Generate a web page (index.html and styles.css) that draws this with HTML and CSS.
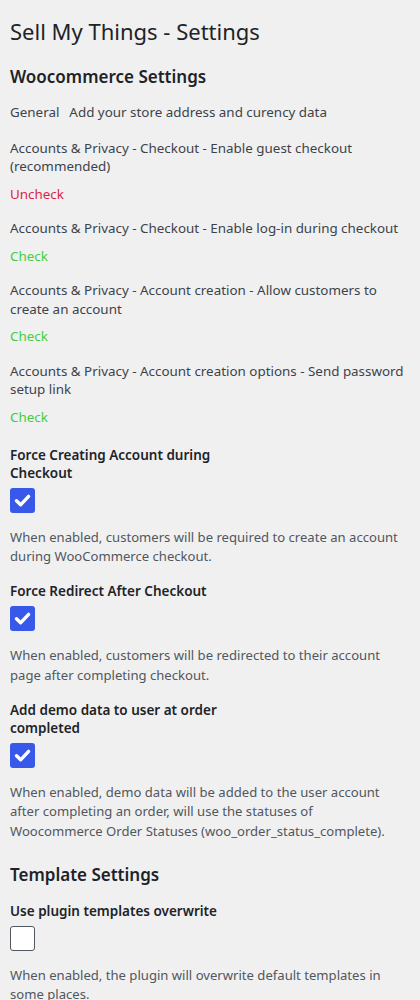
FILE: index.html
```html
<!DOCTYPE html>
<html lang="en">
<head>
<meta charset="utf-8">
<title>Sell My Things - Settings</title>
<link rel="stylesheet" href="styles.css">
</head>
<body>
<div class="wrap">
  <h1 class="page-title">Sell My Things - Settings</h1>

  <h2 class="section-title">Woocommerce Settings</h2>
  <p class="line general"><span class="general-key">General</span>Add your store address and curency data</p>

  <div class="task">
    <p class="line">Accounts &amp; Privacy - Checkout - Enable guest checkout (recommended)</p>
    <p class="status uncheck">Uncheck</p>
  </div>
  <div class="task">
    <p class="line">Accounts &amp; Privacy - Checkout - Enable log-in during checkout</p>
    <p class="status check">Check</p>
  </div>
  <div class="task">
    <p class="line">Accounts &amp; Privacy - Account creation - Allow customers to create an account</p>
    <p class="status check">Check</p>
  </div>
  <div class="task">
    <p class="line">Accounts &amp; Privacy - Account creation options - Send password setup link</p>
    <p class="status check">Check</p>
  </div>

  <div class="fields">
    <div class="field">
      <label class="field-label">Force Creating Account during Checkout</label>
      <span class="checkbox checked"><svg viewBox="0 0 25 25" width="25" height="25"><polyline points="6.5,12.8 10.6,16.8 18.6,8.4" fill="none" stroke="#fff" stroke-width="3.4" stroke-linecap="round" stroke-linejoin="round"/></svg></span>
      <p class="description">When enabled, customers will be required to create an account during WooCommerce checkout.</p>
    </div>
    <div class="field">
      <label class="field-label">Force Redirect After Checkout</label>
      <span class="checkbox checked"><svg viewBox="0 0 25 25" width="25" height="25"><polyline points="6.5,12.8 10.6,16.8 18.6,8.4" fill="none" stroke="#fff" stroke-width="3.4" stroke-linecap="round" stroke-linejoin="round"/></svg></span>
      <p class="description">When enabled, customers will be redirected to their account page after completing checkout.</p>
    </div>
    <div class="field">
      <label class="field-label">Add demo data to user at order completed</label>
      <span class="checkbox checked"><svg viewBox="0 0 25 25" width="25" height="25"><polyline points="6.5,12.8 10.6,16.8 18.6,8.4" fill="none" stroke="#fff" stroke-width="3.4" stroke-linecap="round" stroke-linejoin="round"/></svg></span>
      <p class="description">When enabled, demo data will be added to the user account after completing an order, will use the statuses of Woocommerce Order Statuses (woo_order_status_complete).</p>
    </div>
  </div>

  <h2 class="section-title template-title">Template Settings</h2>
  <div class="field">
    <label class="field-label">Use plugin templates overwrite</label>
    <span class="checkbox"></span>
    <p class="description">When enabled, the plugin will overwrite default templates in some places.</p>
  </div>
</div>
</body>
</html>
```

FILE: styles.css
```css
html, body {
  margin: 0;
  padding: 0;
  background: #f0f0f1;
}
body {
  font-family: "Noto Sans", "Open Sans", "DejaVu Sans", sans-serif;
  color: #3c434a;
  font-size: 13.4px;
}
.wrap {
  padding: 16px 14px 0 10px;
}
.page-title {
  margin: 0 0 19px;
  font-size: 22px;
  font-weight: 400;
  line-height: 30px;
  color: #1d2327;
}
.section-title {
  margin: 0 0 14px;
  font-size: 17px;
  font-weight: 600;
  line-height: 24px;
  color: #1d2327;
}
.template-title {
  margin-top: 21.5px;
  margin-bottom: 15px;
}
.line {
  margin: 0;
  line-height: 18.5px;
}
.general {
  margin-bottom: 17px;
}
.general-key {
  margin-right: 10px;
}
.task {
  margin-bottom: 16.5px;
}
.task .line {
  margin-bottom: 9px;
}
.status {
  margin: 0;
  line-height: 18px;
}
.uncheck { color: #dc1f4a; }
.check { color: #3fcf3f; }
.fields {
  margin-top: 20px;
}
.field {
  margin-bottom: 15.5px;
}
.field-label {
  display: block;
  width: 220px;
  margin-bottom: 6px;
  font-size: 13.5px;
  font-weight: 600;
  line-height: 18px;
  color: #1d2327;
}
.checkbox {
  display: block;
  box-sizing: border-box;
  width: 25px;
  height: 25px;
  border: 1px solid #50575e;
  border-radius: 3px;
  background: #fff;
  margin-bottom: 15px;
}
.checkbox.checked {
  border: none;
  background: #3858e9;
}
.checkbox svg {
  display: block;
}
.description {
  margin: 0;
  font-size: 13.1px;
  line-height: 19.5px;
  color: #50575e;
}
```
